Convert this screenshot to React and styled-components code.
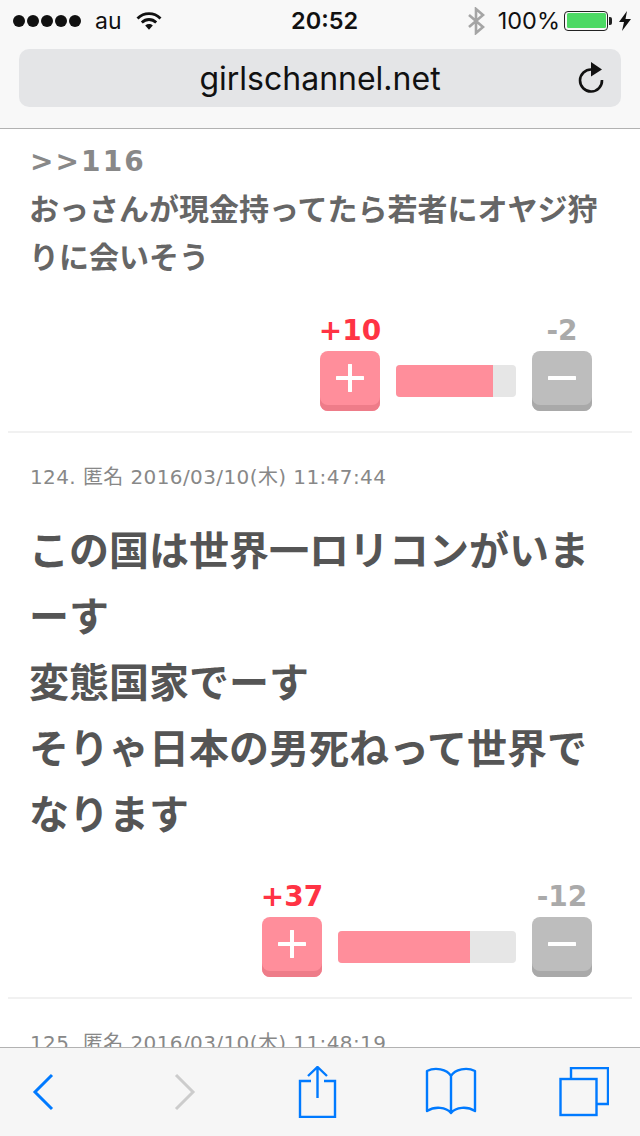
import React from "react";
import styled, { createGlobalStyle } from "styled-components";

const Global = createGlobalStyle`
  html, body { margin: 0; padding: 0; background: #fff; }
  * { box-sizing: border-box; }
`;

const Phone = styled.div`
  width: 640px; height: 1136px; display: flex; flex-direction: column; overflow: hidden;
  font-family: "DejaVu Sans", "Noto Sans CJK JP", sans-serif; background: #fff; position: relative;
`;
const Header = styled.header`
  flex: 0 0 129px; background: #f8f8f8; border-bottom: 1px solid #b2b2b2;
  display: flex; flex-direction: column; padding: 0 19px;
`;
const StatusBar = styled.div`
  height: 49px; display: grid; grid-template-columns: 278px auto 1fr; align-items: center;
  margin: 0 -10px 0 -6px; padding: 0 0 8px 0;
  font-family: Inter, "Liberation Sans", sans-serif; color: #111;
`;
const StatusLeft = styled.div`display: flex; align-items: center; gap: 14px; font-size: 23px;`;
const Dots = styled.div`display: flex; gap: 2px;`;
const Dot = styled.span`width: 12px; height: 12px; border-radius: 50%; background: #111;`;
const Clock = styled.div`font-size: 23.500px; font-weight: 600;`;
const StatusRight = styled.div`display: flex; align-items: center; justify-content: flex-end; gap: 4px; font-size: 23.500px;`;
const BatteryBody = styled.div`
  width: 44px; height: 20px; border: 1.5px solid #222; border-radius: 4px; padding: 1.5px;
`;
const BatteryFill = styled.div`height: 100%; background: #4cd964; border-radius: 1.5px;`;
const UrlBar = styled.div`
  height: 58px; background: #e4e5e7; border-radius: 10px; position: relative;
  display: flex; align-items: center; justify-content: center;
  font-family: "Inter", "Liberation Sans", sans-serif; font-size: 32px; color: #111;
`;
const Reload = styled.svg`position: absolute; right: 15px; top: 13px;`;
const Content = styled.main`flex: 1 1 0; overflow: hidden; padding: 0 8px;`;
const Comment = styled.article`border-bottom: 2px solid #f1f1f1; padding: 0 0 20px;`;
const Meta = styled.div`
  padding: ${p => p.$top}px 22px 0; font-size: 20px; line-height: 24px; color: #888; letter-spacing: 0.4px; white-space: nowrap;
`;
const Body = styled.div`
  padding: ${p => p.$top}px 21px 0; font-weight: 700; font-size: ${p => p.$size}px;
  line-height: ${p => p.$line}px; color: ${p => p.$color}; line-break: loose;
`;
const Anchor = styled.div`
  font-size: 28px; line-height: 34px; font-weight: 700; color: #888; letter-spacing: 2.100px; margin-left: 1px;
`;
const AnchorBody = styled.div`margin-top: 7px;`;
const Rating = styled.div`
  display: grid; grid-template-columns: auto auto 60px; column-gap: 16px; justify-content: end;
  padding-right: 40px; margin-top: ${p => p.$top}px;
`;
const Count = styled.div`
  font-size: 28px; font-weight: 700; line-height: 30px; text-align: center; color: ${p => p.$color};
  margin: 0 -10px 5px;
  grid-row: 1; grid-column: ${p => p.$col};
`;
const VoteButton = styled.div`
  width: 60px; height: 60px; border-radius: 8px; display: flex; align-items: center; justify-content: center;
  background: ${p => p.$bg}; box-shadow: inset 0 -6px 0 ${p => p.$edge}; padding-bottom: 6px;
  grid-row: 2; grid-column: ${p => p.$col};
`;
const Bar = styled.div`
  grid-row: 2; grid-column: 2; width: ${p => p.$width}px; height: 32px; align-self: center;
  background: #e6e6e6; border-radius: 4px; overflow: hidden;
`;
const BarFill = styled.div`height: 100%; background: #ff8e9b;`;
const Toolbar = styled.nav`
  flex: 0 0 89px; background: #f6f6f6; border-top: 1px solid #b2b2b2; margin-top: -1px; overflow: hidden;
  display: grid; grid-template-columns: 117px 134px 134px 132px 133px; align-items: center;
`;
const ToolSlot = styled.div`
  display: flex; justify-content: ${p => p.$start ? "flex-start" : "center"}; padding-left: ${p => p.$start ? 32 : 0}px;
  height: 52px; align-items: center;
`;

const Plus = () => (
  <svg width="28" height="28" viewBox="0 0 28 28">
    <path d="M14 1v26M1 14h26" stroke="#fff" strokeWidth="4" strokeLinecap="round" />
  </svg>
);
const Minus = () => (
  <svg width="28" height="28" viewBox="0 0 28 28">
    <path d="M1 14h26" stroke="#fff" strokeWidth="4" strokeLinecap="round" />
  </svg>
);

const Vote = ({ plus, minus, barWidth, pct, top }) => (
  <Rating $top={top}>
    <Count $col={1} $color="#ff3344">{plus}</Count>
    <Count $col={3} $color="#aaaaaa">{minus}</Count>
    <VoteButton $col={1} $bg="#ff8e9b" $edge="#ee7c89"><Plus /></VoteButton>
    <Bar $width={barWidth}><BarFill style={{ width: `${pct}%` }} /></Bar>
    <VoteButton $col={3} $bg="#bdbdbd" $edge="#a9a9a9"><Minus /></VoteButton>
  </Rating>
);

const BLUE = "#007aff";

export default function App() {
  return (
    <Phone>
      <Global />
      <Header>
        <StatusBar>
          <StatusLeft>
            <Dots>{[0, 1, 2, 3, 4].map(i => <Dot key={i} />)}</Dots>
            <span>au</span>
            <svg width="26" height="20" viewBox="0 0 26 20">
              <path d="M1.500 7.500C8 1 18 1 24.500 7.500" fill="none" stroke="#111" strokeWidth="2.800" />
              <path d="M5.800 11.500C10 7.500 16 7.500 20.200 11.500" fill="none" stroke="#111" strokeWidth="2.800" />
              <path d="M9.200 14.500C11.500 12.600 14.500 12.600 16.800 14.500L13 18.800z" fill="#111" />
            </svg>
          </StatusLeft>
          <Clock>20:52</Clock>
          <StatusRight>
            <svg width="18" height="28" viewBox="0 0 18 28" style={{ marginRight: 9 }}>
              <path d="M2 8l14 12-7 6V2l7 6L2 20" fill="none" stroke="#a5a5a5" strokeWidth="2.600" />
            </svg>
            <span>100%</span>
            <BatteryBody><BatteryFill /></BatteryBody>
            <svg width="3" height="8" viewBox="0 0 3 8" style={{ marginLeft: -3 }}><path d="M0 0h1a2 2 0 0 1 2 2v4a2 2 0 0 1-2 2H0z" fill="#222" /></svg>
            <svg width="12" height="20" viewBox="0 0 12 20" style={{ marginLeft: 3 }}><path d="M8 0L0 11h5l-2 9 9-12H6.500z" fill="#111" /></svg>
          </StatusRight>
        </StatusBar>
        <UrlBar>
          girlschannel.net
          <Reload width="30" height="32" viewBox="0 0 30 32">
            <path d="M15.500 7.500A11 11 0 1 0 26 18" fill="none" stroke="#111" strokeWidth="2.600" />
            <path d="M15 0l11 7.500-11 7z" fill="#111" />
          </Reload>
        </UrlBar>
      </Header>
      <Content>
        <Comment>
          <Body $top={16} $size={30} $line={48} $color="#666">
            <Anchor>&gt;&gt;116</Anchor>
            <AnchorBody>おっさんが現金持ってたら若者にオヤジ狩りに会いそう</AnchorBody>
          </Body>
          <Vote plus="+10" minus="-2" barWidth={120} pct={81} top={34} />
        </Comment>
        <Comment>
          <Meta $top={32}>124. 匿名 2016/03/10(木) 11:47:44</Meta>
          <Body $top={29} $size={40} $line={66} $color="#555">
            この国は世界一ロリコンがいまーす<br />変態国家でーす<br />そりゃ日本の男死ねって世界でなります
          </Body>
          <Vote plus="+37" minus="-12" barWidth={178} pct={74} top={34} />
        </Comment>
        <Meta $top={32}>125. 匿名 2016/03/10(木) 11:48:19</Meta>
      </Content>
      <Toolbar>
        <ToolSlot $start>
          <svg width="24" height="40" viewBox="0 0 24 40"><path d="M20 3L3 20l17 17" fill="none" stroke={BLUE} strokeWidth="3" /></svg>
        </ToolSlot>
        <ToolSlot>
          <svg width="24" height="40" viewBox="0 0 24 40"><path d="M4 3l17 17L4 37" fill="none" stroke="#cccccc" strokeWidth="3" /></svg>
        </ToolSlot>
        <ToolSlot>
          <svg width="40" height="52" viewBox="0 0 40 52"><path d="M13 15H2v36h35V15H26M19.500 32V2M10 10l9.500-9 9.500 9" fill="none" stroke={BLUE} strokeWidth="2.400" /></svg>
        </ToolSlot>
        <ToolSlot>
          <svg width="52" height="50" viewBox="0 0 52 50"><path d="M26 9C22 2 10 0 2 4v40c8-5 19-4 24 2 5-6 16-7 24-2V4C42 0 30 2 26 9zM26 9v37" fill="none" stroke={BLUE} strokeWidth="2.400" strokeLinejoin="round" /></svg>
        </ToolSlot>
        <ToolSlot>
          <svg width="50" height="50" viewBox="0 0 50 50"><path d="M12 11V1h37v36H38" fill="none" stroke={BLUE} strokeWidth="2.400" /><rect x="1.500" y="12" width="36" height="36" fill="none" stroke={BLUE} strokeWidth="2.400" /></svg>
        </ToolSlot>
      </Toolbar>
    </Phone>
  );
}
